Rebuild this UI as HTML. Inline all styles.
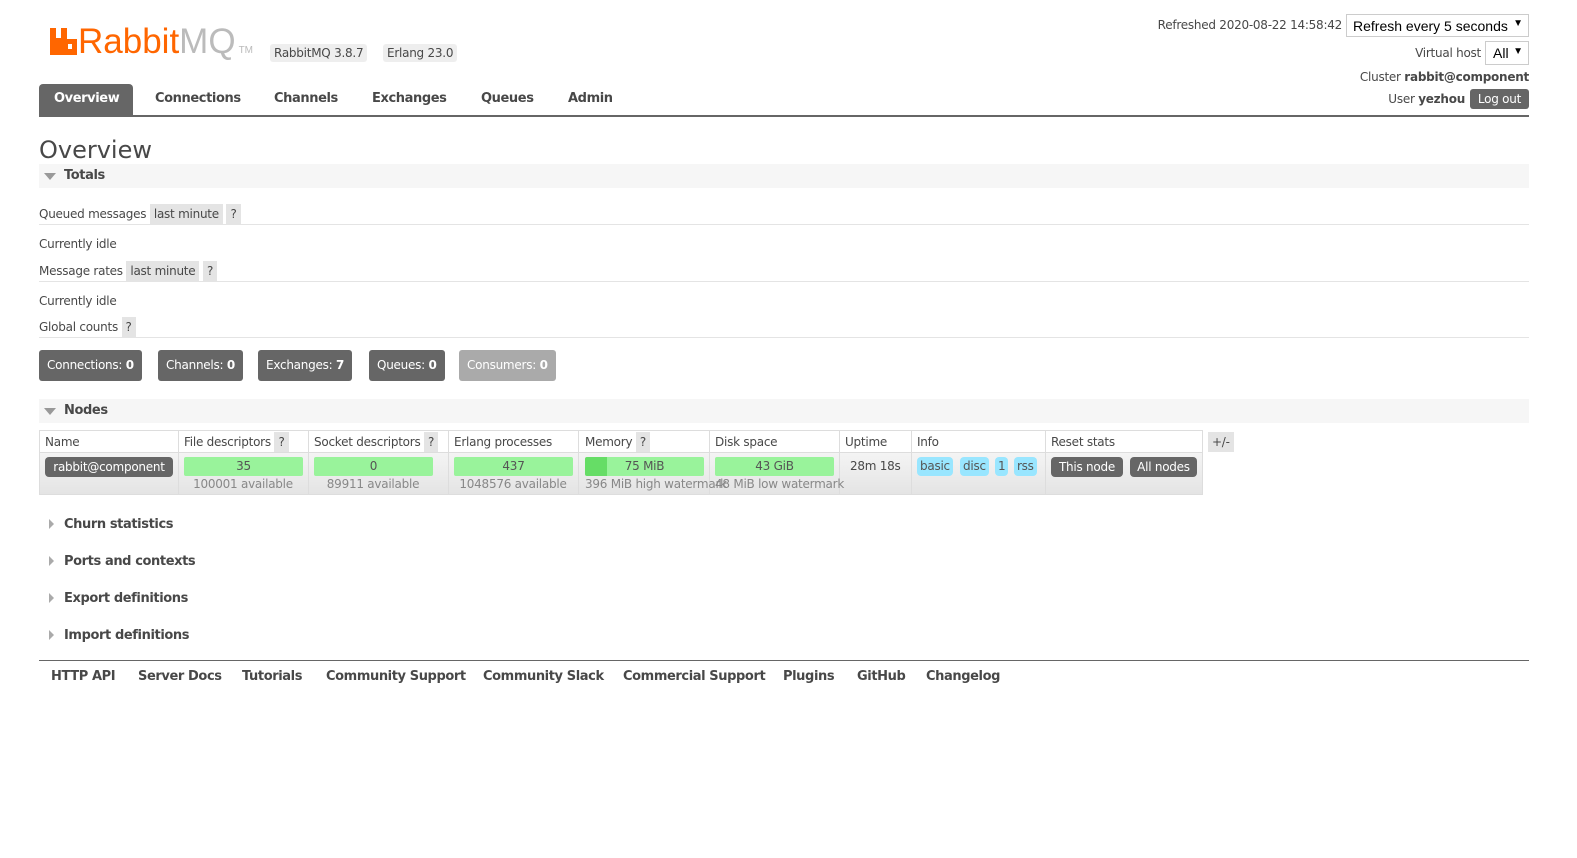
<!DOCTYPE html>
<html><head><meta charset="utf-8"><style>
*{margin:0;padding:0;box-sizing:border-box}
body{width:1577px;height:858px;background:#fff;font-family:"DejaVu Sans","Liberation Sans",sans-serif;font-size:12px;color:#484848;position:relative;overflow:hidden;letter-spacing:-0.25px}
.a{position:absolute;white-space:nowrap}
.b{font-weight:bold}
.tag{background:#eee;border-radius:3px;padding:2px 4px}
.q{background:#e4e4e4;padding:3px 4px}
.btn{background:#666;color:#fff;border-radius:3px;font-weight:normal}
.cnt{position:absolute;top:350px;height:31px;line-height:31px;background:#666;color:#fff;border-radius:3px;padding:0 8px}
.sec{position:absolute;left:39px;width:1490px;height:24px;background:#f6f6f6}
.hr{position:absolute;left:39px;width:1490px;height:1px;background:#e4e4e4}
.tri{position:absolute;width:0;height:0}
.green{position:absolute;top:457px;height:19px;background:#99f39b;border-radius:2px;text-align:center;line-height:19px;color:#555}
.sub{position:absolute;top:477px;color:#888;text-align:center}
.vl{position:absolute;top:431px;width:1px;height:63px;background:#ddd}
.pill{position:absolute;top:457px;height:19px;line-height:19px;background:#99e6ff;border-radius:4px;padding:0 3px;color:#555}
.nav{position:absolute;top:91px;font-weight:bold;color:#484848;font-size:13px;letter-spacing:-0.4px}
.foot{position:absolute;top:669px;font-weight:bold;font-size:13px;letter-spacing:-0.4px}
.col{position:absolute;font-weight:bold;font-size:13px;letter-spacing:-0.4px}
</style></head><body>
<svg class="a" style="left:50px;top:28px" width="27" height="27" viewBox="0 0 27 27"><path d="M0 0h6v10h5V0h6v11h10v16H0z M18 16v5h4v-5z" fill="#f60" fill-rule="evenodd"/></svg>
<div class="a" style="left:78px;top:22px;font-family:'Liberation Sans',sans-serif;font-size:35px;letter-spacing:0;color:#f60">Rabbit<span style="color:#bbb">MQ</span><span style="font-size:10px;color:#bbb;margin-left:3px">TM</span></div>
<div class="a tag" style="left:270px;top:44px">RabbitMQ 3.8.7</div>
<div class="a tag" style="left:383px;top:44px">Erlang 23.0</div>
<div class="a" style="right:235px;top:18px">Refreshed 2020-08-22 14:58:42</div>
<div class="a" style="left:1346px;top:14px;width:183px;height:23px;border:1px solid #ccc;font-family:'Liberation Sans',sans-serif;font-size:14px;letter-spacing:0;color:#000;padding:3px 6px">Refresh every 5 seconds<span style="position:absolute;right:5px;top:3px;font-size:10px">▼</span></div>
<div class="a" style="right:96px;top:46px">Virtual host</div>
<div class="a" style="left:1485px;top:41px;width:44px;height:24px;border:1px solid #ccc;font-family:'Liberation Sans',sans-serif;font-size:14px;letter-spacing:0;color:#000;padding:3px 7px">All<span style="position:absolute;right:5px;top:4px;font-size:10px">▼</span></div>
<div class="a" style="right:48px;top:70px">Cluster <b>rabbit@component</b></div>
<div class="a" style="right:112px;top:92px">User <b>yezhou</b></div>
<div class="a btn" style="left:1470px;top:89px;width:59px;height:20px;line-height:20px;text-align:center">Log out</div>
<div class="a" style="left:39px;top:84px;width:94px;height:32px;background:#666;border-radius:4px 4px 0 0"></div>
<div class="nav" style="left:54px;color:#fff">Overview</div>
<div class="nav" style="left:155px">Connections</div>
<div class="nav" style="left:274px">Channels</div>
<div class="nav" style="left:372px">Exchanges</div>
<div class="nav" style="left:481px">Queues</div>
<div class="nav" style="left:568px">Admin</div>
<div class="a" style="left:39px;top:115px;width:1490px;height:2px;background:#666"></div>
<div class="a" style="left:39px;top:136px;font-size:24px;letter-spacing:0;color:#484848">Overview</div>
<div class="sec" style="top:164px"></div>
<div class="tri" style="left:44px;top:173px;border-left:6px solid transparent;border-right:6px solid transparent;border-top:7px solid #999"></div>
<div class="col" style="left:64px;top:168px">Totals</div>
<div class="a" style="left:39px;top:207px">Queued messages <span class="q">last minute</span> <span class="q">?</span></div>
<div class="hr" style="top:224px"></div>
<div class="a" style="left:39px;top:237px">Currently idle</div>
<div class="a" style="left:39px;top:264px">Message rates <span class="q">last minute</span> <span class="q">?</span></div>
<div class="hr" style="top:281px"></div>
<div class="a" style="left:39px;top:294px">Currently idle</div>
<div class="a" style="left:39px;top:320px">Global counts <span class="q">?</span></div>
<div class="hr" style="top:337px"></div>
<div class="cnt" style="left:39px">Connections: <b>0</b></div>
<div class="cnt" style="left:158px">Channels: <b>0</b></div>
<div class="cnt" style="left:258px">Exchanges: <b>7</b></div>
<div class="cnt" style="left:369px">Queues: <b>0</b></div>
<div class="cnt" style="left:459px;background:#aaa">Consumers: <b>0</b></div>
<div class="sec" style="top:399px"></div>
<div class="tri" style="left:44px;top:408px;border-left:6px solid transparent;border-right:6px solid transparent;border-top:7px solid #999"></div>
<div class="col" style="left:64px;top:403px">Nodes</div>
<div class="a" style="left:39px;top:430px;width:1164px;height:65px;border:1px solid #ddd"></div>
<div class="a" style="left:40px;top:453px;width:1162px;height:41px;background:linear-gradient(#f4f4f4,#e4e4e4)"></div>
<div class="a" style="left:40px;top:452px;width:1162px;height:1px;background:#ddd"></div>
<div class="vl" style="left:178px"></div><div class="vl" style="left:308px"></div><div class="vl" style="left:448px"></div><div class="vl" style="left:578px"></div><div class="vl" style="left:709px"></div><div class="vl" style="left:839px"></div><div class="vl" style="left:911px"></div><div class="vl" style="left:1045px"></div>
<div class="a" style="left:45px;top:435px">Name</div>
<div class="a" style="left:184px;top:435px">File descriptors <span class="q">?</span></div>
<div class="a" style="left:314px;top:435px">Socket descriptors <span class="q">?</span></div>
<div class="a" style="left:454px;top:435px">Erlang processes</div>
<div class="a" style="left:585px;top:435px">Memory <span class="q">?</span></div>
<div class="a" style="left:715px;top:435px">Disk space</div>
<div class="a" style="left:845px;top:435px">Uptime</div>
<div class="a" style="left:917px;top:435px">Info</div>
<div class="a" style="left:1051px;top:435px">Reset stats</div>
<div class="a q" style="left:1208px;top:432px">+/-</div>
<div class="a btn" style="left:45px;top:457px;width:128px;height:20px;line-height:20px;text-align:center;border-radius:4px">rabbit@component</div>
<div class="green" style="left:184px;width:119px">35</div><div class="sub" style="left:178px;width:130px">100001 available</div>
<div class="green" style="left:314px;width:119px">0</div><div class="sub" style="left:308px;width:130px">89911 available</div>
<div class="green" style="left:454px;width:119px">437</div><div class="sub" style="left:448px;width:130px">1048576 available</div>
<div class="green" style="left:585px;width:119px;background:linear-gradient(90deg,#66dd66 0,#66dd66 22px,#99f39b 22px)">75 MiB</div><div class="sub" style="left:585px">396 MiB high watermark</div>
<div class="green" style="left:715px;width:119px">43 GiB</div><div class="sub" style="left:715px">48 MiB low watermark</div>
<div class="a" style="left:850px;top:459px">28m 18s</div>
<div class="pill" style="left:917px">basic</div><div class="pill" style="left:960px">disc</div><div class="pill" style="left:995px">1</div><div class="pill" style="left:1014px">rss</div>
<div class="a btn" style="left:1051px;top:457px;width:72px;height:20px;line-height:20px;text-align:center;border-radius:4px">This node</div>
<div class="a btn" style="left:1130px;top:457px;width:67px;height:20px;line-height:20px;text-align:center;border-radius:4px">All nodes</div>
<div class="tri" style="left:49px;top:519px;border-top:5px solid transparent;border-bottom:5px solid transparent;border-left:5px solid #aaa"></div>
<div class="col" style="left:64px;top:517px">Churn statistics</div>
<div class="tri" style="left:49px;top:556px;border-top:5px solid transparent;border-bottom:5px solid transparent;border-left:5px solid #aaa"></div>
<div class="col" style="left:64px;top:554px">Ports and contexts</div>
<div class="tri" style="left:49px;top:593px;border-top:5px solid transparent;border-bottom:5px solid transparent;border-left:5px solid #aaa"></div>
<div class="col" style="left:64px;top:591px">Export definitions</div>
<div class="tri" style="left:49px;top:630px;border-top:5px solid transparent;border-bottom:5px solid transparent;border-left:5px solid #aaa"></div>
<div class="col" style="left:64px;top:628px">Import definitions</div>
<div class="a" style="left:39px;top:660px;width:1490px;height:1px;background:#666"></div>
<div class="foot" style="left:51px">HTTP API</div>
<div class="foot" style="left:138px">Server Docs</div>
<div class="foot" style="left:242px">Tutorials</div>
<div class="foot" style="left:326px">Community Support</div>
<div class="foot" style="left:483px">Community Slack</div>
<div class="foot" style="left:623px">Commercial Support</div>
<div class="foot" style="left:783px">Plugins</div>
<div class="foot" style="left:857px">GitHub</div>
<div class="foot" style="left:926px">Changelog</div>
</body></html>
